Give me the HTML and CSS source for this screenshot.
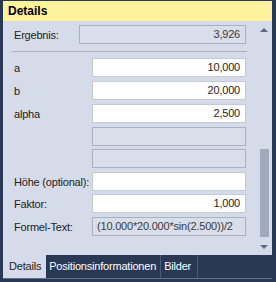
FILE: index.html
```html
<!DOCTYPE html>
<html lang="de">
<head>
    <meta charset="UTF-8">
    <title>Details</title>
    <link rel="stylesheet" href="styles.css">
</head>
<body>

<div class="window">
    <div class="title">Details</div>

    <div class="content">
        <div class="form">
            <div class="row result">
                <span class="label">Ergebnis:</span>
                <div class="field readonly num">3,926</div>
            </div>
            <div class="separator"></div>

            <div class="row">
                <span class="label">a</span>
                <div class="field num">10,000</div>
            </div>
            <div class="row gap4">
                <span class="label">b</span>
                <div class="field num">20,000</div>
            </div>
            <div class="row gap4">
                <span class="label">alpha</span>
                <div class="field num">2,500</div>
            </div>
            <div class="row gap4">
                <span class="label"></span>
                <div class="field readonly"></div>
            </div>
            <div class="row gap3">
                <span class="label"></span>
                <div class="field readonly"></div>
            </div>
            <div class="row gap4">
                <span class="label">Höhe (optional):</span>
                <div class="field"></div>
            </div>
            <div class="row gap3">
                <span class="label">Faktor:</span>
                <div class="field num">1,000</div>
            </div>
            <div class="row gap4">
                <span class="label">Formel-Text:</span>
                <div class="field readonly">(10.000*20.000*sin(2.500))/2</div>
            </div>
        </div>

        <!-- vertical scrollbar -->
        <div class="scrollbar">
            <span class="arrow up"></span>
            <div class="track">
                <div class="thumb"></div>
            </div>
            <span class="arrow down"></span>
        </div>
    </div>

    <div class="tabs">
        <span class="tab active">Details</span>
        <span class="tab">Positionsinformationen</span>
        <span class="tab">Bilder</span>
    </div>
</div>

</body>
</html>
```

FILE: styles.css
```css
body {
    margin: 0;
    background-color: #293955;
    font-family: "Liberation Sans", Arial, sans-serif;
    font-size: 11px;
    letter-spacing: -0.2px;
    color: #1e1e1e;
}
.window {
    width: 276px;
    height: 282px;
    box-sizing: border-box;
    padding: 1px 4px 0 3px;
    display: flex;
    flex-direction: column;
}
.title {
    height: 20px;
    line-height: 21px;
    padding-left: 5px;
    background-color: #fff29d;
    font-weight: bold;
    font-size: 12px;
    letter-spacing: 0;
    color: #000;
}
.content {
    height: 234px;
    display: flex;
    background-color: #d6dbe9;
}
.form {
    flex: 1;
    padding: 4px 10px 0 11px;
}
.row {
    display: flex;
    align-items: center;
    height: 19px;
}
.gap4 {
    margin-top: 4px;
}
.gap3 {
    margin-top: 3px;
}
.label {
    width: 78px;
    flex-shrink: 0;
    white-space: nowrap;
    color: #222;
}
.result .label {
    width: 65px;
}
.field {
    flex: 1;
    height: 19px;
    box-sizing: border-box;
    border: 1px solid #c3c9d6;
    background-color: #fff;
    line-height: 17px;
    padding: 0 4px;
    white-space: nowrap;
    overflow: hidden;
}
.field.readonly {
    background-color: #d9deeb;
    border-color: #a8b0c1;
    color: #3a3a3a;
}
.num {
    text-align: right;
    padding-right: 5px;
}
.separator {
    height: 1px;
    margin: 7px -1px 6px -2px;
    background-color: #a8b0c1;
}
.scrollbar {
    width: 16px;
    display: flex;
    flex-direction: column;
    align-items: center;
}
.arrow {
    width: 0;
    height: 0;
    border-left: 4px solid transparent;
    border-right: 4px solid transparent;
}
.arrow.up {
    margin-top: 7px;
    border-bottom: 4px solid #5b6a85;
}
.arrow.down {
    margin-bottom: 6px;
    border-top: 4px solid #5b6a85;
}
.track {
    flex: 1;
    width: 9px;
    display: flex;
    flex-direction: column;
    justify-content: flex-end;
    padding-bottom: 8px;
}
.thumb {
    height: 88px;
    background-color: #9ea9ba;
}
.tabs {
    height: 23px;
    display: flex;
    border-bottom: 1px solid #5d6d8a;
}
.tab {
    line-height: 22px;
    padding: 0 4px 0 3px;
    color: #fff;
    border-right: 1px solid #4b5b78;
    white-space: nowrap;
}
.tab:last-child {
    padding-right: 6px;
}
.tab.active {
    background-color: #d6dbe9;
    color: #1e1e1e;
    padding: 0 5px 0 6px;
    border-right: none;
}
```
